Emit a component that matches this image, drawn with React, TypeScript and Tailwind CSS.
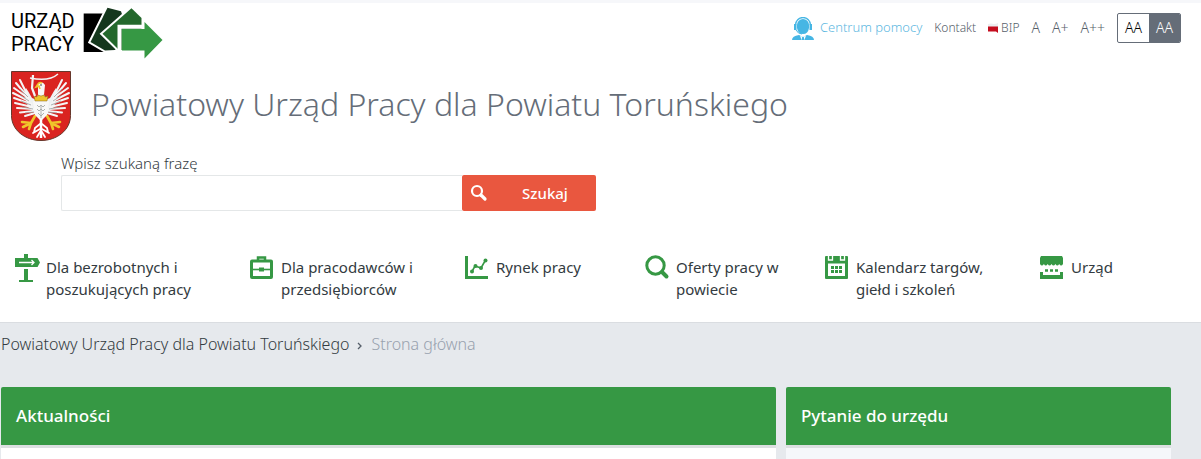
import type { ReactNode } from "react";

function OfficeLogo() {
  return (
    <svg viewBox="0 0 80 52" className="h-[52px] w-20" aria-hidden="true">
      <path d="M.7 6.500H20L22 45H.7z" fill="#000" />
      <path d="M24.500 .8L38 4.300 46 28 32 43 22 43.500 7.500 35z" fill="#15371d" stroke="#fff" strokeWidth="4" paintOrder="stroke" />
      <path d="M48.500 1.200L58.500 11v32H36L19.500 26.800z" fill="#24682c" stroke="#fff" strokeWidth="4" paintOrder="stroke" />
      <path d="M36.500 46V19.800h24.500" stroke="#fff" strokeWidth="4" fill="none" />
      <path d="M39 22h22.500v-7L79.500 33 61.500 51.500V43.500H39z" fill="#369844" />
    </svg>
  );
}

const feathers = [
  "M17 27L3 17", "M18 30L2 22", "M20 33L3 27", "M21 36L4 32", "M22 38L6 37",
  "M23 40L9 41.500", "M24 42L14 45", "M16 25L5 12", "M16 23L9 9",
];

function Crest() {
  return (
    <svg viewBox="0 0 60 70" className="h-[70px] w-[60px] shrink-0" role="img" aria-label="Herb powiatu toruńskiego">
      <path d="M.5.5h59v44C59.500 59 46 69.500 30 69.500S.5 59 .5 44.500z" fill="#da2420" stroke="#66372b" />
      {[false, true].map((flip) => (
        <g key={String(flip)} transform={flip ? "translate(60 0) scale(-1 1)" : undefined}>
          <path d="M28 30L21 27 17 20 15 17 13 22 17 36 26 44z" fill="#eef0f1" />
          {feathers.map((d) => (
            <path key={d} d={d} stroke="#f5f6f6" strokeWidth="2" strokeLinecap="round" />
          ))}
          <path d="M17 26L9 18M18 30L9 24M20 34L10 30M22 38L11 36M23 41L14 42" stroke="#8d9492" strokeWidth=".7" />
          <path d="M24 45l-4 7M20 52l-9-1M20 52l-8 4M20 52l-2 6" stroke="#f0c52a" strokeWidth="2.600" strokeLinecap="round" />
          <path d="M29 53l-5 4-1 4M29 58l-7 4M29 61l-3 5" stroke="#fff" strokeWidth="1.800" strokeLinecap="round" fill="none" />
        </g>
      ))}
      <path d="M27 13q4-4 7 1l-1 10 5 7-2 13-6 6-6-6-2-13 5-7z" fill="#f8f8f7" />
      <path d="M26 34l2 2 2-2 2 2 2-2M26 38l2 2 2-2 2 2 2-2M27 42l3 3 3-3M30 35v12" stroke="#999f9d" strokeWidth=".8" fill="none" />
      <path d="M30 48v19" stroke="#fff" strokeWidth="2.500" />
      <path d="M23 25l3 1 1-2 3 1 3-1 1 2 3-1-1 5H24z" fill="#edc42b" stroke="#88651c" strokeWidth=".5" />
      <path d="M31 12q-3-1-4 1l-2 3 3-1 1 3" fill="none" stroke="#efc42d" strokeWidth="1.600" />
      <circle cx="30" cy="14" r=".8" fill="#333" />
      <path d="M19 7Q38 11 47 3" stroke="#f2f4f5" strokeWidth="1.500" fill="none" />
      <path d="M22 4l-1 13 3 8" stroke="#f2f4f5" strokeWidth="2.200" fill="none" />
    </svg>
  );
}

function NavIcon({ children }: { children: ReactNode }) {
  return (
    <svg viewBox="0 0 25 28" className="h-7 w-[25px] shrink-0" fill="none" stroke="#369844" aria-hidden="true">
      {children}
    </svg>
  );
}

const navItems: { label: string; icon: ReactNode }[] = [
  {
    label: "Dla bezrobotnych i poszukujących pracy",
    icon: (
      <>
        <path d="M9 0h4v4h9.500L25 8.500 22.500 13H0V4h9zM9 15h4v11h5v2H4v-2h5z" fill="#369844" stroke="none" />
        <path d="M4 8.500h15M16.500 6L19 8.500 16.500 11" stroke="#fff" strokeWidth="1.300" />
      </>
    ),
  },
  {
    label: "Dla pracodawców i przedsiębiorców",
    icon: (
      <>
        <rect x="1.500" y="7" width="20" height="16.500" rx=".5" strokeWidth="3" />
        <path d="M8 7V3.500h7V7" strokeWidth="2.500" />
        <path d="M3 15.500h17" strokeWidth="1.600" />
        <path d="M9 13.500h5v4H9z" fill="#369844" stroke="none" />
      </>
    ),
  },
  {
    label: "Rynek pracy",
    icon: (
      <>
        <path d="M1.500 2v21.500H23" strokeWidth="3" />
        <path d="M7 17.500l3-5.500 6 2 4-7" strokeWidth="1.600" />
        <g fill="#369844" stroke="none">
          <circle cx="7" cy="17.500" r="2" /><circle cx="10.500" cy="12" r="2" />
          <circle cx="16" cy="14" r="2" /><circle cx="20.500" cy="6.500" r="2" />
        </g>
      </>
    ),
  },
  {
    label: "Oferty pracy w powiecie",
    icon: (
      <>
        <circle cx="10.500" cy="11.500" r="8.700" strokeWidth="3" />
        <path d="M17 18l4.500 4.500" strokeWidth="4" strokeLinecap="round" />
      </>
    ),
  },
  {
    label: "Kalendarz targów, giełd i szkoleń",
    icon: (
      <>
        <rect y="2" width="23" height="23" rx="1" fill="#369844" stroke="none" />
        <path d="M3 9.500h17v12.500H3z" fill="#fff" stroke="none" />
        <path d="M3.500 2v4h4V2M15.500 2v4h4V2" stroke="#fff" strokeWidth="1.300" />
        <path d="M6 13.500h11M6 17.500h11" strokeWidth="3" strokeDasharray="3 1" />
      </>
    ),
  },
  {
    label: "Urząd",
    icon: (
      <>
        <path d="M1 2h21l1 2v6q-1.900 3-3.800 0-1.900 3-3.800 0-1.900 3-3.900 0-1.900 3-3.800 0-1.900 3-3.800 0Q1.900 13 0 10V4z" fill="#369844" stroke="none" />
        <path d="M0 18h3v3h17v-3h3v7H0z" fill="#369844" stroke="none" />
        <path d="M5 16.500h13" strokeWidth="2.500" strokeDasharray="3 2" />
      </>
    ),
  },
];

function HelpIcon() {
  return (
    <svg viewBox="0 0 22 23" className="h-[23px] w-[22px]" aria-hidden="true">
      <path d="M3.500 8a7.500 7.500 0 0 1 15 0" fill="none" stroke="#46b6e4" strokeWidth="1.300" />
      <path d="M5 8a6 6 0 0 1 12 0v3q-1 6-6 6t-6-6z" fill="#46b6e4" />
      <path d="M2 7h2.500v6H2zM17.500 7H20v6h-2.500z" fill="#46b6e4" />
      <path d="M4 13q2 4 6 4" fill="none" stroke="#46b6e4" />
      <path d="M0 23q0-4 7-5l4 2 4-2q7 1 7 5z" fill="#46b6e4" />
      <path d="M8 18.500L9.500 23h3L14 18.500l-3 1.500z" fill="#fff" />
      <path d="M10.200 20h1.600l.7 3h-3z" fill="#46b6e4" />
    </svg>
  );
}

function Panel({ title, body }: { title: string; body: string }) {
  return (
    <section>
      <h2 className="rounded-t-xs bg-[#369844] px-[15px] py-4 text-[17px] leading-[26px] font-medium text-white">{title}</h2>
      <div className={`h-3.5 border-t-[3px] border-[#dcdfe1] ${body}`} />
    </section>
  );
}

export default function App() {
  return (
    <div className="border-t-[3px] border-[#f6f7fa] bg-white font-['Noto_Sans',sans-serif] text-[#333b41]">
      <header>
        <div className="flex items-start justify-between pr-5 pl-[11px]">
          <a href="#" className="mt-1 flex items-start gap-2 text-black">
            <span className="mt-[3px] font-['Roboto',sans-serif] text-[20px] leading-[23px]">
              URZĄD<br />PRACY
            </span>
            <OfficeLogo />
          </a>
          <div className="mt-2.5 flex h-[30px] items-center text-[12px] font-light text-[#555e69]">
            <a href="#" className="mr-3 flex items-center gap-1.5 text-[13px] text-[#60b8df]"><HelpIcon />Centrum pomocy</a>
            <a href="#" className="mr-3">Kontakt</a>
            <a href="#" className="mr-3 flex items-center gap-[3px]">
              <svg viewBox="0 0 10 10" className="size-2.5" aria-hidden="true">
                <path d="M0 1q3-1 6 0 2 0 4-1v4H0z" fill="#eceef0" />
                <path d="M0 3.500h10V10L8 8.500H0z" fill="#c40d1e" />
              </svg>
              BIP
            </a>
            <button type="button" className="mr-3 text-sm">A</button>
            <button type="button" className="mr-3 text-sm">A+</button>
            <button type="button" className="mr-3 text-sm">A++</button>
            <div className="flex h-[30px] overflow-hidden rounded-xs border border-[#656d78] text-sm">
              <button type="button" className="w-[31px] text-black">AA</button>
              <button type="button" className="w-[31px] bg-[#656d78] text-white">AA</button>
            </div>
          </div>
        </div>
        <div className="mt-3 flex items-start gap-5 pl-[11px]">
          <Crest />
          <h1 className="mt-[13px] text-[32px] leading-10 font-light text-[#656d78]">Powiatowy Urząd Pracy dla Powiatu Toruńskiego</h1>
        </div>
        <form className="mt-[11px] pl-[61px]" onSubmit={(e) => e.preventDefault()}>
          <label htmlFor="phrase" className="block text-[15px] leading-[23px] font-light">Wpisz szukaną frazę</label>
          <div className="flex h-9">
            <input id="phrase" type="text" className="w-full max-w-[401px] rounded-l-xs border border-r-0 border-[#e4e7e8] px-3 outline-none" />
            <button type="submit" className="flex w-[134px] shrink-0 items-center rounded-xs bg-[#e9573f] pl-2 text-[15px] font-medium text-white">
              <svg viewBox="0 0 18 18" className="size-[18px]" fill="none" stroke="#fff" strokeLinecap="round" aria-hidden="true">
                <circle cx="7" cy="7" r="5" strokeWidth="2.200" />
                <path d="M11 11l4 4" strokeWidth="3.200" />
              </svg>
              <span className="flex-1 pl-1.5 text-center">Szukaj</span>
            </button>
          </div>
        </form>
        <nav className="mt-[43px] grid grid-cols-[235fr_215fr_180fr_180fr_215fr_161fr] pl-[15px]">
          {navItems.map((item) => (
            <a key={item.label} href="#" className="flex gap-1.5 pr-3">
              <NavIcon>{item.icon}</NavIcon>
              <span className="mt-0.5 max-w-[156px] text-[15px] leading-[22px]">{item.label}</span>
            </a>
          ))}
        </nav>
      </header>
      <main className="mt-[22px] border-t border-[#dadde1] bg-[#e6e9ed]">
        <nav aria-label="Okruszki" className="flex items-center pt-[9px] pl-px text-[16px] leading-6 font-light">
          <a href="#">Powiatowy Urząd Pracy dla Powiatu Toruńskiego</a>
          <svg viewBox="0 0 6 8" className="mx-2 mt-1 h-2 w-1.5" fill="none" stroke="#555e69" strokeWidth="1.300" aria-hidden="true">
            <path d="M1 1l3 3-3 3" />
          </svg>
          <span className="text-[#98a1ae]">Strona główna</span>
        </nav>
        <div className="mt-[31px] mr-[30px] ml-px grid grid-cols-[775fr_385fr] gap-2.5">
          <Panel title="Aktualności" body="bg-white" />
          <Panel title="Pytanie do urzędu" body="bg-[#f5f7fa]" />
        </div>
      </main>
    </div>
  );
}
